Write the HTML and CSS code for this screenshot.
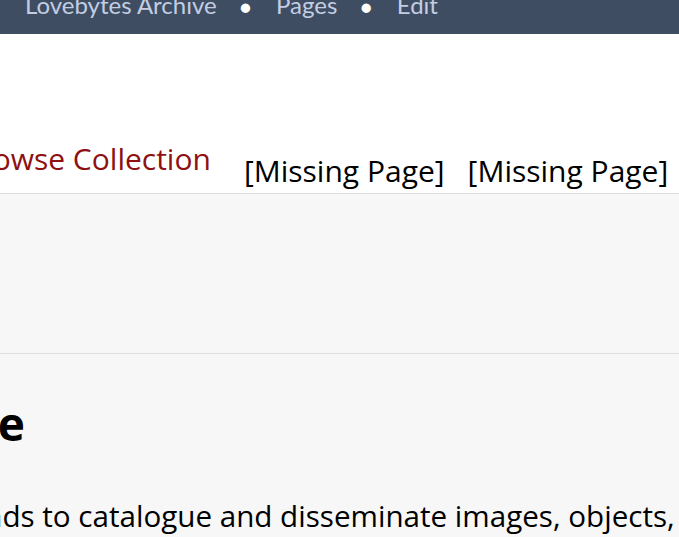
FILE: index.html
```html
<!DOCTYPE html>
<html lang="en">
<head>
    <meta charset="UTF-8">
    <title>Lovebytes Archive</title>
    <link rel="stylesheet" href="styles.css">
</head>

<body>
<div class="topbar">
    <ul class="crumbs">
        <li>Lovebytes Archive</li>
        <li class="dot">&#9679;</li>
        <li>Pages</li>
        <li class="dot">&#9679;</li>
        <li>Edit</li>
    </ul>
</div>

<div class="masthead">
    <ul class="tabs">
        <li class="active">Browse Collection</li>
        <li class="missing">[Missing Page]</li>
        <li class="missing">[Missing Page]</li>
    </ul>
</div>

<div class="banner"></div>

<div class="content">
    <h1>The Archive</h1>
    <p>The Archive intends to catalogue and disseminate images, objects, documents and recordings</p>
</div>
</body>
</html>
```

FILE: styles.css
```css
html, body {
    margin: 0;
    padding: 0;
    overflow: hidden;
    background-color: #f7f7f7;
}

.topbar {
    background-color: #3f4d62;
    height: 34px;
    overflow: hidden;
}

.crumbs {
    list-style: none;
    margin: -8px 0 0 25px;
    padding: 0;
    display: flex;
    align-items: baseline;
    gap: 23px;
    font-family: Lato, sans-serif;
    font-size: 24px;
    line-height: 26px;
    color: #c3cee2;
    white-space: nowrap;
}

.crumbs .dot {
    color: white;
    font-size: 19px;
    margin-right: 2px;
}

.masthead {
    background-color: white;
    height: 159px;
    border-bottom: 1px solid #dedede;
    display: flex;
    align-items: flex-end;
}

.tabs {
    list-style: none;
    margin: 0 0 0 -39px;
    padding: 0;
    display: flex;
    align-items: flex-end;
    font-family: "Open Sans", sans-serif;
    font-size: 30px;
    white-space: nowrap;
}

.tabs li {
    line-height: 36px;
}

.tabs .active {
    color: #8e1010;
    margin-bottom: 16px;
    margin-right: 33px;
}

.tabs .missing {
    color: black;
    margin-right: 23px;
    padding-bottom: 4px;
}

.banner {
    height: 159px;
    border-bottom: 1px solid #dedede;
}

.content {
    margin-left: -245px;
    font-family: "Open Sans", sans-serif;
    white-space: nowrap;
}

.content h1 {
    font-size: 46px;
    font-weight: bold;
    margin: 38px 0 0 0;
    color: black;
}

.content p {
    font-size: 29.6px;
    margin: 41px 0 0 8px;
    color: black;
}
```
